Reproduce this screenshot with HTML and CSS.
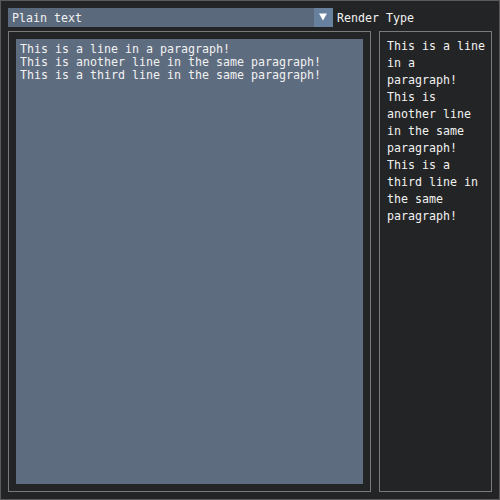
FILE: index.html
```html
<!DOCTYPE html>
<html>
<head>
<meta charset="utf-8">
<link rel="stylesheet" href="styles.css">
</head>
<body>
<div class="window">
  <div class="toolbar">
    <div class="combo">
      <span class="combo-value">Plain text</span>
      <span class="combo-arrow"><svg width="19" height="19" viewBox="0 0 19 19"><polygon points="5,5.5 13,5.5 9,12.5" fill="#ffffff"/></svg></span>
    </div>
    <span class="label">Render Type</span>
  </div>
  <div class="panes">
    <div class="child left">
      <div class="textbox">
        <div class="line">This is a line in a paragraph!</div>
        <div class="line">This is another line in the same paragraph!</div>
        <div class="line">This is a third line in the same paragraph!</div>
      </div>
    </div>
    <div class="child right">
      <div class="wrap">
        <div class="para">This is a line in a paragraph!</div>
        <div class="para">This is another line in the same paragraph!</div>
        <div class="para">This is a third line in the same paragraph!</div>
      </div>
    </div>
  </div>
</div>
</body>
</html>
```

FILE: styles.css
```css
* { box-sizing: border-box; }
html, body { margin: 0; padding: 0; background: #232425; }
body {
  font-family: "DejaVu Sans Mono", "Liberation Mono", monospace;
  font-size: 11.63px;
  color: #f2f2f2;
}
.window {
  width: 500px;
  height: 500px;
  border: 1px solid #5a5a5c;
  background: #232425;
  padding: 7px;
  display: flex;
  flex-direction: column;
  gap: 4px;
}
.toolbar {
  display: flex;
  align-items: center;
  gap: 4px;
  height: 19px;
}
.combo {
  width: 325px;
  height: 19px;
  background: #5b697d;
  display: flex;
  align-items: center;
  justify-content: space-between;
}
.combo-value {
  padding-left: 4px;
  padding-top: 1px;
  line-height: 13px;
  white-space: pre;
}
.combo-arrow {
  width: 19px;
  height: 19px;
  background: #66809e;
  display: block;
}
.combo-arrow svg { display: block; }
.label { line-height: 13px; padding-top: 1px; white-space: pre; }
.panes {
  display: flex;
  gap: 8px;
  height: 461px;
}
.child {
  height: 461px;
  border: 1px solid #7a7a7c;
}
.left {
  width: 363px;
  padding: 7px;
}
.textbox {
  width: 100%;
  height: 100%;
  background: #5e6c80;
  padding: 4px 4px 3px 4px;
}
.line { line-height: 13px; white-space: pre; }
.right {
  width: 113px;
  padding: 6px 4px 0 7px;
}
.wrap { width: 100px; }
.para { line-height: 17px; }
```
